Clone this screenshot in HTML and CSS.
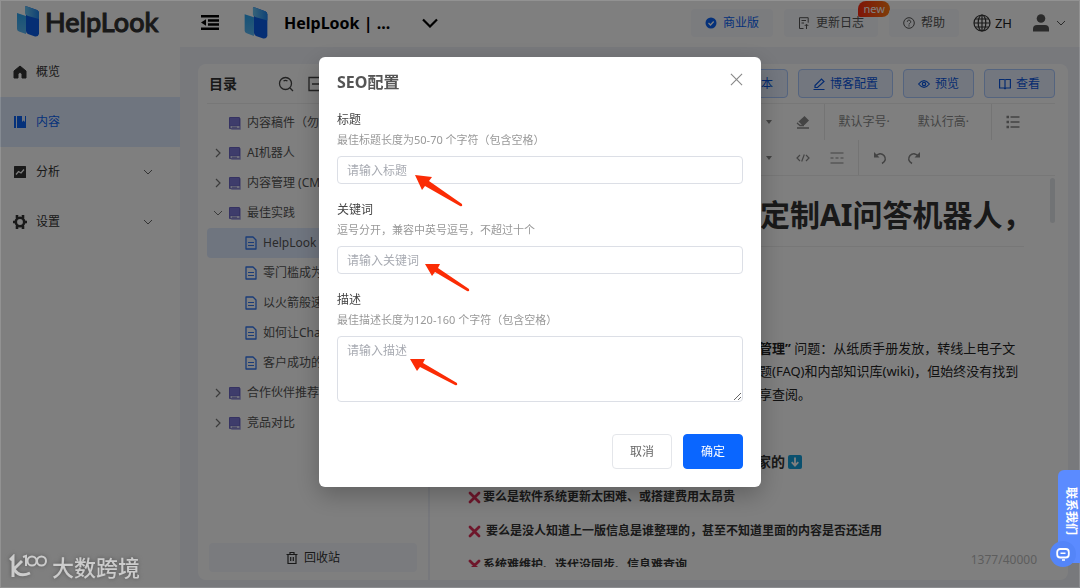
FILE: index.html
```html
<!DOCTYPE html>
<html lang="zh-CN">
<head>
<meta charset="utf-8">
<meta name="viewport" content="width=device-width, initial-scale=1">
<title>HelpLook</title>
<link rel="stylesheet" href="styles.css">
</head>
<body>
<svg class="defs" aria-hidden="true">
  <defs>
    <linearGradient id="g-left" x1="0" y1="0" x2="0" y2="1"><stop offset="0" stop-color="#2aa4f0"/><stop offset="1" stop-color="#5cb8f4"/></linearGradient>
    <linearGradient id="g-top" x1="0" y1="0" x2="1" y2="0"><stop offset="0" stop-color="#6cc6f2"/><stop offset="1" stop-color="#1e86ee"/></linearGradient>
    <symbol id="brand" viewBox="0 0 22 31">
      <path d="M0 7 9 10V28L2 25.500Q0 24.800 0 23Z" fill="url(#g-left)"/>
      <path d="M8 1Q8 0 10 .5L20 4Q22 5 22 7V28Q21 31 18 30.500L11 28Q9 27 9 25V10Z" fill="#0a5de8"/>
      <path d="M8 1Q8 0 10 .5L20 4Q22 5 22 7V13L11 10Q8 9 8 7Z" fill="url(#g-top)"/>
    </symbol>
    <symbol id="chev-down" viewBox="0 0 10 6"><path d="M1 1l4 4 4-4" fill="none" stroke="currentColor" stroke-width="1"/></symbol>
    <symbol id="chev-right" viewBox="0 0 6 10"><path d="M1 1l4 4-4 4" fill="none" stroke="currentColor" stroke-width="1.200"/></symbol>
    <symbol id="book" viewBox="0 0 12 13">
      <rect x="2" y="1" width="10" height="12" rx="1" fill="#b9b6e6"/>
      <rect x="0" y="0" width="11" height="12" rx="1" fill="#6a64c4"/>
      <path d="M1 1h9v7.500H1z" fill="#7d78d6"/>
      <path d="M1.500 9h9v2.300h-9z" fill="#dddcf6"/><path d="M3 10.200h5" stroke="#5b55b5" stroke-width=".8"/>
    </symbol>
    <symbol id="doc" viewBox="0 0 12 14">
      <path d="M1 1h7l3 3v9H1z" fill="none" stroke="#3478f0" stroke-width="1.300" stroke-linejoin="round"/>
      <path d="M3 6.500h6M3 9.500h6" stroke="#3478f0" stroke-width="1.200"/>
    </symbol>
    <symbol id="cross" viewBox="0 0 13 13"><path d="M2 2l9 9M11 2l-9 9" stroke="#dd2e57" stroke-width="2.800" stroke-linecap="round"/></symbol>
  </defs>
</svg>

<div class="app">
  <aside class="sidebar">
    <a class="logo" href="#"><svg class="logo-mark"><use href="#brand"/></svg><span>HelpLook</span></a>
    <nav class="menu">
      <a class="menu-item" href="#"><svg viewBox="0 0 14 14"><path d="M7 1l6 5v7H9V9.500a2 2 0 0 0-4 0V13H1V6z" fill="currentColor" stroke="currentColor" stroke-linejoin="round"/></svg><span>概览</span></a>
      <a class="menu-item active" href="#"><svg viewBox="0 0 14 14"><path d="M1 1h2v12H1zM4 1h5v6l1.500-1.500L12 7V1h1v12H4z" fill="currentColor"/></svg><span>内容</span></a>
      <a class="menu-item" href="#"><svg viewBox="0 0 14 14"><rect x="1" y="1" width="12" height="12" rx=".5" fill="currentColor"/><path d="M3 9.500l2.500-3L8 8l3-3.500" fill="none" stroke="#fff" stroke-width="1.200"/></svg><span>分析</span><svg class="arrow"><use href="#chev-down"/></svg></a>
      <a class="menu-item" href="#"><svg viewBox="0 0 14 14"><circle cx="7" cy="7" r="4.200" fill="none" stroke="currentColor" stroke-width="2.600"/><path d="M4 0v3M10 0v3M4 11v3M10 11v3M0 7h2M12 7h2" stroke="currentColor" stroke-width="2.600"/></svg><span>设置</span><svg class="arrow"><use href="#chev-down"/></svg></a>
    </nav>
  </aside>

  <div class="body">
    <header class="topbar">
      <button class="icon-btn" aria-label="收起菜单"><svg class="fold" viewBox="0 0 18 15"><path d="M0 1.200h18M7 5.500h11M7 9.500h11M0 13.800h18" stroke="#000" stroke-width="2.400"/><path d="M0 7.500l5-3.200v6.400z"/></svg></button>
      <svg class="site-mark"><use href="#brand"/></svg>
      <button class="site-name"><span>HelpLook | ...</span><svg viewBox="0 0 16 10"><path d="M1 1.500l7 7 7-7" fill="none" stroke="#000" stroke-width="2.200"/></svg></button>
      <div class="top-actions">
        <button class="pill primary"><svg viewBox="0 0 12 12"><circle cx="6" cy="6" r="5.500" fill="#0a63f5"/><path d="M3.500 6l2 2 3.200-3.500" fill="none" stroke="#fff" stroke-width="1.300"/></svg>商业版</button>
        <button class="pill">
          <svg viewBox="0 0 12 12"><path d="M5.500 11.500h-4V.7h8.700v5M3.500 3.500h4.500M3.500 6h2.500M8.500 12V7.500M6.700 9l1.800-1.800L10.300 9" fill="none" stroke="currentColor"/></svg>更新日志
          <span class="new">new</span>
        </button>
        <button class="pill"><svg viewBox="0 0 12 12"><circle cx="6" cy="6" r="5.300" fill="none" stroke="currentColor"/><path d="M4.300 4.800a1.700 1.700 0 1 1 2.500 1.500Q6 6.700 6 7.500M6 8.300v1.200" fill="none" stroke="currentColor"/></svg>帮助</button>
        <button class="lang"><svg viewBox="0 0 18 18"><g fill="none" stroke="#333" stroke-width="1.200"><circle cx="9" cy="9" r="8"/><ellipse cx="9" cy="9" rx="3.800" ry="8"/><path d="M9 1v16M1 9h16M2.200 5h13.600M2.200 13h13.600"/></g></svg>ZH</button>
        <button class="user" aria-label="账户"><svg class="person" viewBox="0 0 16 18"><circle cx="8" cy="4.500" r="4.300" fill="#555"/><path d="M0 17.500v-2.500Q0 11 4 11h8q4 0 4 4v2.500z" fill="#555"/></svg><svg class="arrow"><use href="#chev-down"/></svg></button>
      </div>
    </header>

    <main class="card">
      <section class="tree">
        <div class="tree-head"><h2>目录</h2>
          <button class="icon-btn" aria-label="搜索"><svg viewBox="0 0 16 16"><circle cx="7.500" cy="7.500" r="6" fill="none" stroke="#444" stroke-width="1.300"/><path d="M5.500 5q2-1.400 4 0M12 12l3 3" fill="none" stroke="#444" stroke-width="1.300"/></svg></button>
          <button class="icon-btn" aria-label="新建"><svg viewBox="0 0 16 16"><path d="M13 1.500H2v13h11M5 8h8" fill="none" stroke="#444" stroke-width="1.300"/></svg></button>
        </div>
        <ul class="tree-list">
          <li><i class="tw"></i><svg class="bk"><use href="#book"/></svg>内容稿件（勿</li>
          <li><i class="tw"><svg class="cr"><use href="#chev-right"/></svg></i><svg class="bk"><use href="#book"/></svg>AI机器人</li>
          <li><i class="tw"><svg class="cr"><use href="#chev-right"/></svg></i><svg class="bk"><use href="#book"/></svg>内容管理 (CM</li>
          <li><i class="tw"><svg class="cd"><use href="#chev-down"/></svg></i><svg class="bk"><use href="#book"/></svg>最佳实践</li>
          <li class="leaf current"><svg class="dc"><use href="#doc"/></svg>HelpLook</li>
          <li class="leaf"><svg class="dc"><use href="#doc"/></svg>零门槛成为</li>
          <li class="leaf"><svg class="dc"><use href="#doc"/></svg>以火箭般速</li>
          <li class="leaf"><svg class="dc"><use href="#doc"/></svg>如何让Cha</li>
          <li class="leaf"><svg class="dc"><use href="#doc"/></svg>客户成功的</li>
          <li><i class="tw"><svg class="cr"><use href="#chev-right"/></svg></i><svg class="bk"><use href="#book"/></svg>合作伙伴推荐</li>
          <li><i class="tw"><svg class="cr"><use href="#chev-right"/></svg></i><svg class="bk"><use href="#book"/></svg>竞品对比</li>
        </ul>
        <button class="trash"><svg viewBox="0 0 12 12"><path d="M.5 2.500h11M4 2.500v-2h4v2M2 2.500v9h8v-9M4.700 5v4M7.300 5v4" fill="none" stroke="currentColor" stroke-width="1.200"/></svg>回收站</button>
      </section>

      <section class="editor">
        <div class="editor-actions">
          <button class="act">本</button>
          <button class="act"><svg viewBox="0 0 12 12"><path d="M2 7.500L8.500 1 11 3.500 4.500 9.500H2zM.5 11.500h11" fill="none" stroke="currentColor" stroke-width="1.200"/></svg>博客配置</button>
          <button class="act"><svg viewBox="0 0 12 12"><path d="M.6 6Q6-.8 11.400 6 6 12.800.6 6z" fill="none" stroke="currentColor" stroke-width="1.200"/><circle cx="6" cy="6" r="1.700" fill="none" stroke="currentColor" stroke-width="1.200"/></svg>预览</button>
          <button class="act"><svg viewBox="0 0 12 12"><path d="M6 2v9.500M.6 1.500H5l1 .7 1-.7h4.400v8.500H7l-1 .7-1-.7H.6z" fill="none" stroke="currentColor" stroke-width="1.200"/></svg>查看</button>
        </div>
        <div class="toolbar first">
          <svg class="caret" viewBox="0 0 6 4"><path d="M0 0h6L3 4z"/></svg>
          <svg class="tool" viewBox="0 0 14 14"><path d="M8.500 1L13 5.500 8.500 10h-4L1.500 7.500z" fill="currentColor"/><path d="M2.500 6.500l4 4H4L1.500 8z" fill="#fff"/><path d="M1 8l3 2.500h4M1 13h12" fill="none" stroke="currentColor" stroke-width="1.300"/></svg>
          <i class="sep"></i>
          <button class="drop">默认字号·</button>
          <button class="drop">默认行高·</button>
          <i class="sep"></i>
          <svg class="tool list" viewBox="0 0 14 14"><path d="M4.500 2h9M4.500 7h9M4.500 12h9" stroke="currentColor" stroke-width="1.300"/><path d="M.5 2h2.500M.5 7h2.500M.5 12h2.500" stroke="currentColor" stroke-width="2.400"/></svg>
        </div>
        <div class="toolbar second">
          <svg class="caret" viewBox="0 0 6 4"><path d="M0 0h6L3 4z"/></svg>
          <svg class="tool" viewBox="0 0 14 14"><path d="M4 4L1 7l3 3M10 4l3 3-3 3M8.300 3.500l-2.600 7" fill="none" stroke="currentColor" stroke-width="1.200"/></svg>
          <svg class="tool" viewBox="0 0 14 14"><path d="M.5 2h13M.5 12h13" stroke="currentColor" stroke-width="1.200"/><path d="M.5 7h13" stroke="currentColor" stroke-width="1.200" stroke-dasharray="3 2"/></svg>
          <i class="sep"></i>
          <svg class="tool" viewBox="0 0 14 14"><path d="M2 5.500Q7 .5 11 4.500q3.500 4.500-2 8" fill="none" stroke="currentColor" stroke-width="1.500"/><path d="M1 1v5.500h5.500z" fill="currentColor"/></svg>
          <svg class="tool" viewBox="0 0 14 14"><path d="M12 5.500Q7 .5 3 4.500q-3.500 4.500 2 8" fill="none" stroke="currentColor" stroke-width="1.500"/><path d="M13 1v5.500H7.500z" fill="currentColor"/></svg>
        </div>
        <div class="page">
          <div class="thumb"></div>
          <h1>定制AI问答机器人，</h1>
          <p class="para"><b>管理”</b> 问题：从纸质手册发放，转线上电子文<br>题(FAQ)和内部知识库(wiki)，但始终没有找到<br>享查阅。</p>
          <h3>家的<svg viewBox="0 0 14 14"><rect width="14" height="14" rx="2" fill="#14a1dc"/><path d="M7 2.500v8M3.700 7.200L7 10.700l3.300-3.500" fill="none" stroke="#fff" stroke-width="1.800"/></svg></h3>
          <ul class="pains">
            <li><svg><use href="#cross"/></svg>要么是软件系统更新太困难、或搭建费用太昂贵</li>
            <li><svg><use href="#cross"/></svg>&nbsp;要么是没人知道上一版信息是谁整理的，甚至不知道里面的内容是否还适用</li>
            <li><svg><use href="#cross"/></svg>系统难维护、迭代没同步、信息难查询</li>
          </ul>
        </div>
        <div class="count">1377/40000</div>
      </section>
    </main>
  </div>
</div>

<div class="overlay">
  <form class="modal" role="dialog" aria-labelledby="dlg-title">
    <div class="modal-head"><h2 id="dlg-title">SEO配置</h2><button type="button" class="icon-btn" aria-label="关闭"><svg viewBox="0 0 14 14"><path d="M1 1l12 12M13 1L1 13" stroke="#888" stroke-width="1.200"/></svg></button></div>
    <div class="field">
      <label for="f-title">标题</label><p class="hint">最佳标题长度为50-70 个字符（包含空格）</p>
      <input id="f-title" type="text" placeholder="请输入标题">
      <svg class="pointer p1" viewBox="0 0 50 34"><path d="M1 1l17 2-3 4 33 23q1 3-2 2L11 12l-3 4z" fill="#fb2c05"/></svg>
    </div>
    <div class="field">
      <label for="f-key">关键词</label><p class="hint">逗号分开，兼容中英号逗号，不超过十个</p>
      <input id="f-key" type="text" placeholder="请输入关键词">
      <svg class="pointer p2" viewBox="0 0 50 34"><path d="M1 1l15 0-2 4 31 21q1 3-2 2L11 9l-3 4z" fill="#fb2c05"/></svg>
    </div>
    <div class="field">
      <label for="f-desc">描述</label><p class="hint">最佳描述长度为120-160 个字符（包含空格）</p>
      <textarea id="f-desc" placeholder="请输入描述"></textarea>
      <svg class="pointer p3" viewBox="0 0 50 34"><path d="M1 1l15 0-2 4 34 20q1 3-2 2L11 9l-3 4z" fill="#fb2c05"/></svg>
    </div>
    <div class="modal-foot"><button type="button" class="btn">取消</button><button type="submit" class="btn ok">确定</button></div>
  </form>
</div>

<button class="contact"><span>联系我们</span><i><svg viewBox="0 0 14 14"><rect x="1.200" y="2" width="11.600" height="8.500" rx="3" fill="none" stroke="#fff" stroke-width="1.800"/><path d="M4.500 6.200h5M6 13h3" stroke="#fff" stroke-width="1.500"/></svg></i></button>
<div class="watermark"><svg viewBox="0 0 40 26"><g fill="none" stroke="currentColor"><path d="M1 6l3-3v20M13 7L5 15" stroke-width="3"/><path d="M5 15q5 9 16 4" stroke-width="3"/><path d="M14 3l3-1v10" stroke-width="2"/><circle cx="23" cy="7" r="4.500" stroke-width="2"/><circle cx="32.500" cy="7" r="4.500" stroke-width="2"/></g></svg><span>大数跨境</span></div>
</body>
</html>
```
FILE: styles.css
```css
* { box-sizing: border-box; }
body {
  margin: 0;
  font: 12px/20px "Noto Sans", "Noto Sans CJK SC", sans-serif;
  color: #333;
  overflow: hidden;
}
h1, h2, h3, p, ul { margin: 0; padding: 0; }
ul { list-style: none; }
a { color: inherit; text-decoration: none; }
button, input, textarea { font: inherit; color: inherit; }
button { border: 0; background: none; padding: 0; display: flex; align-items: center; }
svg { flex: none; display: block; }
.defs { position: absolute; width: 0; height: 0; }

.app { display: flex; height: 100vh; background: #f0f3f9; }

.sidebar { width: 180px; flex: none; background: #fff; }
.logo { display: flex; align-items: center; gap: 6px; height: 47px; padding: 0 0 4px 17px; font: 500 27px/32px Lato, sans-serif; color: #333; -webkit-text-stroke: 1px #333; }
.logo-mark { width: 22px; height: 31px; }
.menu-item { display: flex; align-items: center; gap: 9px; height: 50px; padding: 0 27px 0 13px; }
.menu-item svg { width: 14px; height: 14px; }
.menu-item .arrow { width: 10px; height: 6px; margin-left: auto; color: #666; }
.menu-item.active { background: #dfebff; color: #0a63f5; }

.body { flex: 1; min-width: 0; display: flex; flex-direction: column; }
.topbar { display: flex; align-items: center; height: 47px; padding: 0 14px 2px 21px; background: #fff; }
.fold { width: 18px; height: 15px; }
.site-mark { width: 24px; height: 32px; margin: 0 16px 0 25px; }
.site-name { gap: 32px; font-size: 16px; font-weight: 700; color: #000; }
.site-name svg { width: 16px; height: 10px; }
.top-actions { display: flex; align-items: center; margin-left: auto; color: #555; }
.pill { position: relative; gap: 6px; height: 28px; padding: 0 14px; margin-right: 11px; border-radius: 4px; background: #f6f8fc; }
.pill svg { width: 12px; height: 12px; }
.pill.primary { color: #0a63f5; }
.new { position: absolute; right: -12px; top: -8px; height: 16px; padding: 0 5px; border-radius: 8px 8px 8px 2px; background: linear-gradient(90deg, #ff2a10, #ff7a10); color: #fff; font-size: 11px; line-height: 15px; }
.lang { gap: 4px; margin: 0 21px 0 3px; font-size: 13px; color: #222; }
.lang svg { width: 18px; height: 18px; }
.user { gap: 7px; color: #555; }
.person { width: 16px; height: 18px; }
.user .arrow { width: 10px; height: 6px; }

.card { flex: 1; min-height: 0; display: flex; margin: 17px 12px 8px 18px; background: #fff; border-radius: 8px; }
.tree { width: 232px; flex: none; display: flex; flex-direction: column; padding: 0 11px 8px 9px; border-right: 2px solid #eef1f8; }
.tree-head { display: flex; align-items: center; height: 40px; padding: 0 2px; border-bottom: 1px solid #eee; }
.tree-head h2 { flex: 1; font-size: 14px; }
.tree-head .icon-btn { margin-right: 13px; }
.tree-head svg { width: 16px; height: 16px; }
.tree-head .icon-btn:last-child { margin-right: 92px; }
.tree-list { flex: 1; padding-top: 4px; color: #555; }
.tree-list li { display: flex; align-items: center; height: 30px; padding-left: 6px; white-space: nowrap; overflow: hidden; }
.tw { width: 16px; color: #777; }
.cr { width: 6px; height: 10px; margin-left: 2px; }
.cd { width: 10px; height: 6px; }
.bk { width: 12px; height: 13px; margin-right: 6px; }
.dc { width: 12px; height: 14px; margin-right: 6px; }
.tree-list .leaf { padding-left: 38px; }
.tree-list .current { background: #dfebff; border-radius: 4px; }
.trash { justify-content: center; gap: 6px; height: 29px; margin-left: 2px; border-radius: 4px; background: #f5f7fc; }
.trash svg { width: 12px; height: 12px; }

.editor { position: relative; flex: 1; min-width: 0; display: flex; flex-direction: column; padding: 0 13px 13px 38px; }
.editor-actions { flex: none; display: flex; justify-content: flex-end; align-items: center; gap: 10px; height: 40px; border-bottom: 1px solid #eee; }
.act { gap: 5px; height: 29px; padding: 0 14px; border: 1px solid #a9c8ff; border-radius: 4px; background: #e6efff; color: #0a56e0; }
.act svg { width: 12px; height: 12px; }
.toolbar { flex: none; display: flex; align-items: center; justify-content: flex-end; height: 36px; color: #888; }
.toolbar .caret { width: 6px; height: 4px; fill: currentColor; margin-right: 24px; }
.tool { width: 14px; height: 14px; }
.sep { align-self: stretch; width: 1px; background: #e8e8e8; margin: 0 14px; }
.drop { margin-right: 28px; }
.drop + .sep { margin-left: -6px; }
.toolbar.first { padding-right: 35px; }
.toolbar.second { padding-right: 134px; border-bottom: 1px solid #eee; }
.second .tool + .tool { margin-left: 20px; }

.page { position: relative; flex: 1; min-height: 0; overflow: hidden; padding-right: 31px; }
.thumb { position: absolute; right: 0; top: 2px; width: 5px; height: 45px; border-radius: 3px; background: #e3e6ea; }
.page h1 { padding: 16px 0 8px 292px; font-size: 30px; line-height: 46px; border-bottom: 1px solid #eee; white-space: nowrap; }
.para { padding: 90px 0 0 291px; font-size: 13px; line-height: 23px; white-space: nowrap; color: #222; }
.page h3 { display: flex; align-items: center; gap: 3px; padding: 44px 0 0 289px; font-size: 14px; line-height: 23px; }
.page h3 svg { width: 14px; height: 14px; }
.pains { padding-top: 7px; font-weight: 700; }
.pains li { display: flex; align-items: center; gap: 2px; height: 34px; }
.pains svg { width: 13px; height: 13px; }
.count { position: absolute; right: 31px; bottom: 10px; color: #bbb; }

.overlay { position: fixed; inset: 0; padding-top: 56px; border: 1px solid rgba(255, 255, 255, .15); background: rgba(0, 0, 0, .5); }
.modal { width: 41%; min-width: 442px; margin: 0 auto; padding: 13px 18px 18px; border-radius: 6px; background: #fff; box-shadow: 0 8px 24px rgba(0, 0, 0, .25); }
.modal-head { display: flex; align-items: flex-start; justify-content: space-between; height: 24px; margin-bottom: 16px; }
.modal-head h2 { font-size: 16px; line-height: 24px; color: #555; }
.modal-head .icon-btn { height: 18px; }
.modal-head svg { width: 13px; height: 13px; }
.field { position: relative; display: flex; flex-direction: column; margin-bottom: 16px; }
.field label { color: #444; }
.hint { margin-bottom: 6px; font-size: 11px; color: #999; }
.field input, .field textarea { width: 100%; padding: 0 9px; border: 1px solid #dcdfe6; border-radius: 4px; background: #fff; outline: 0; }
.field input { height: 28px; }
.field textarea { display: block; height: 66px; padding-top: 4px; resize: vertical; }
.field ::placeholder { color: #a8abb2; }
.pointer { position: absolute; width: 50px; height: 34px; }
.p1 { left: 77px; top: 64px; }
.p2 { left: 87px; top: 63px; }
.p3 { left: 72px; top: 68px; }
.modal-foot { display: flex; justify-content: flex-end; gap: 11px; margin-top: 32px; }
.btn { justify-content: center; width: 60px; height: 35px; border: 1px solid #e4e6ea; border-radius: 4px; color: #666; }
.btn.ok { background: #0a66ff; border-color: #0a66ff; color: #fff; }

.contact { position: fixed; right: 0; bottom: 25px; width: 22px; height: 93px; justify-content: center; align-items: flex-start; padding: 17px 0 0 4px; border-radius: 6px 0 0 0; background: #5b8bff; color: #fff; font-weight: 700; line-height: 16px; }
.contact span { writing-mode: vertical-rl; text-orientation: sideways; }
.contact i { position: absolute; left: -8px; bottom: -4px; display: grid; place-items: center; width: 26px; height: 26px; border-radius: 50%; background: #5485f8; }
.contact svg { width: 14px; height: 14px; }
.watermark { position: fixed; left: 9px; bottom: 6px; display: flex; align-items: center; gap: 3px; color: #ccc; font-size: 22px; line-height: 30px; font-weight: 500; filter: drop-shadow(0 0 2px #555); }
.watermark svg { width: 40px; height: 26px; }
```
